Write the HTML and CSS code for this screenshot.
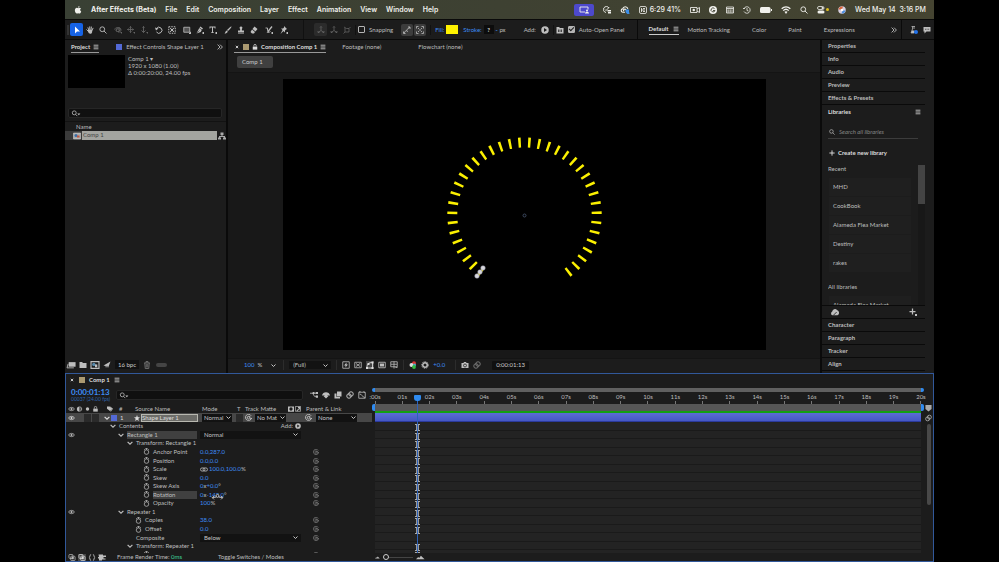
FILE: index.html
```
<!DOCTYPE html>
<html lang="en">

<head>
    <meta charset="UTF-8">
    <meta name="viewport" content="width=device-width, initial-scale=1.0">
    <title>After Effects (Beta)</title>
    <link rel="stylesheet" href="styles.css">
</head>

<body>

    <!-- Icon sprite -->
    <svg class="sprite" aria-hidden="true">
        <symbol id="i-apple" viewBox="0 0 16 16"><path fill="currentColor" d="M11 0c.1 1.6-1.2 3.2-2.9 3.300C8 1.7 9.4.2 11 0zM8.300 4.300c.7 0 1.600-.8 2.900-.7 1.200.1 2.100.6 2.700 1.500-2.400 1.500-2 4.700.5 5.700-.6 1.800-2 4.300-3.500 4.300-1 0-1.400-.6-2.600-.6s-1.600.6-2.600.6C3.800 15.100 1.600 11.500 1.700 8.500c.1-2.800 1.900-4.700 4-4.800 1 0 1.900.6 2.600.6z"/></symbol>
        <symbol id="i-menu" viewBox="0 0 10 10"><path stroke="currentColor" stroke-width="1.3" d="M1 2h8M1 5h8M1 8h8"/></symbol>
        <symbol id="i-more" viewBox="0 0 10 10"><path fill="none" stroke="currentColor" stroke-width="1.5" d="M1 1l4 4-4 4M5 1l4 4-4 4"/></symbol>
        <symbol id="i-down" viewBox="0 0 10 10"><path fill="none" stroke="currentColor" stroke-width="2" d="M1 3l4 4 4-4"/></symbol>
        <symbol id="i-close" viewBox="0 0 10 10"><path stroke="currentColor" stroke-width="1.5" d="M3 3l4 4M7 3L3 7"/></symbol>
        <symbol id="i-search" viewBox="0 0 16 16"><g fill="none" stroke="currentColor" stroke-width="1.8"><circle cx="6.500" cy="6.500" r="4.800"/><path d="M10 10l5 5"/></g></symbol>
        <symbol id="i-searchmenu" viewBox="0 0 20 16"><g fill="none" stroke="currentColor" stroke-width="1.8"><circle cx="6" cy="6.500" r="4.500"/><path d="M9 10l4 4"/></g><path fill="currentColor" d="M13 8h7l-3.500 4z"/></symbol>
        <symbol id="i-arrow" viewBox="0 0 16 16"><path fill="currentColor" d="M4 1v14l4-4h6z"/></symbol>
        <symbol id="i-hand" viewBox="0 0 16 16"><path fill="none" stroke="currentColor" stroke-width="1.9" stroke-linecap="round" d="M5.500 8L4 3.500M7.500 7V1.500M10 7l.8-5M12 8.500l2-4M5 11L1.500 7.500"/><path fill="currentColor" d="M4.500 7.500h8.500l-1 5.500c-.5 1.500-1.500 2.500-3.500 2.500S5 14 3.500 10z"/></symbol>
        <symbol id="i-orbit" viewBox="0 0 16 16"><g fill="none" stroke="currentColor" stroke-width="1.6"><path d="M3 9C0 6 3 3 7 3s7 2 7 5-3 5-6 4"/><path d="M5 6h5v5H5zM5 6l2-2h5v4l-2 2"/></g><path fill="currentColor" d="M12 12h4v4z"/></symbol>
        <symbol id="i-pan" viewBox="0 0 16 16"><path fill="none" stroke="currentColor" stroke-width="1.7" d="M7 1v12M1 7h12M5 3l2-2 2 2M5 11l2 2 2-2M3 5L1 7l2 2M11 5l2 2-2 2"/><path fill="currentColor" d="M12 12h4v4z"/></symbol>
        <symbol id="i-dolly" viewBox="0 0 16 16"><path fill="none" stroke="currentColor" stroke-width="1.8" d="M7 1v12M3 9l4 4 4-4M5 3l2-2 2 2"/><path fill="currentColor" d="M12 12h4v4z"/></symbol>
        <symbol id="i-rotate" viewBox="0 0 16 16"><path fill="none" stroke="currentColor" stroke-width="2" d="M3 5a6 6 0 1 1 0 7"/><path fill="currentColor" d="M0 3l7 2-5 4z"/></symbol>
        <symbol id="i-anchor" viewBox="0 0 16 16"><path fill="none" stroke="currentColor" stroke-width="2" stroke-dasharray="3 2" d="M1.500 1.500h13v13h-13z"/><path stroke="currentColor" stroke-width="1.8" d="M4 4l8 8M12 4l-8 8"/><circle cx="8" cy="8" r="2.500" fill="currentColor"/></symbol>
        <symbol id="i-rect" viewBox="0 0 16 16"><path fill="#555" stroke="currentColor" stroke-width="1.6" d="M1.500 2.500h12v10h-12z"/><path fill="currentColor" d="M12 14l4-3v5h-4z"/></symbol>
        <symbol id="i-pen" viewBox="0 0 16 16"><path fill="currentColor" d="M9 1l5 4-2 2-5-4zM6.500 4l5 4-2 4L1 15l4-8zM13 12h3v4h-3z"/><path stroke="#1c1c1c" d="M1 15l6-6"/></symbol>
        <symbol id="i-type" viewBox="0 0 16 16"><path fill="currentColor" d="M1 1h12v4h-1.500L11 3H8v9.500l2 .5v1H4v-1l2-.5V3H3l-.5 2H1zM13 12h3v4h-3z"/></symbol>
        <symbol id="i-brush" viewBox="0 0 16 16"><path fill="currentColor" d="M15 1c.8.800-4 6.500-7 9L6 8c3-3 8-8 9-7zM5.500 9l2 2c-1 3-3 4-6.500 4 2-2 2-5 4.500-6z"/></symbol>
        <symbol id="i-stamp" viewBox="0 0 16 16"><path fill="currentColor" d="M8 1c3 0 3.500 2.500 2 5-.5 1-.5 2 0 3h4v3H2V9h4c.5-1 .5-2 0-3-1.500-2.500-1-5 2-5zM2 13h12v2H2z"/></symbol>
        <symbol id="i-eraser" viewBox="0 0 16 16"><path fill="currentColor" d="M9 1l6 5-4 5-6-5zM4 7l6 5-2 3H4L1 12z"/></symbol>
        <symbol id="i-roto" viewBox="0 0 16 16"><path fill="none" stroke="currentColor" stroke-width="1.8" d="M1 4h4v5c0 4 4 4 6 2"/><path fill="none" stroke="currentColor" stroke-width="2.5" d="M14 1L6 11"/><path fill="currentColor" d="M3 14l4-4 1 3zM13 12h3v4h-3z"/></symbol>
        <symbol id="i-pin" viewBox="0 0 16 16"><path fill="currentColor" d="M8 0l6 6-2 1-2 2v4L2 5h4l2-2zM5 8l2 2-6 6zM13 12h3v4h-3z"/></symbol>
        <symbol id="i-axis" viewBox="0 0 16 16"><path fill="none" stroke="currentColor" stroke-width="1.6" d="M8 1v8l-6 4M8 9l6 4M6 3l2-2 2 2M2 10v3h3M14 10v3h-3"/></symbol>
        <symbol id="i-axisview" viewBox="0 0 16 16"><path fill="none" stroke="currentColor" stroke-width="1.5" d="M2 2l5 3h5v7H4V4M12 5l3-3M4 12l-3 3"/></symbol>
        <symbol id="i-snapedge" viewBox="0 0 16 16"><path fill="none" stroke="currentColor" stroke-width="1.7" d="M2 14l4-5 4 2M7 8l7-6M10 2h4v4M1 11v4h4"/></symbol>
        <symbol id="i-snapgrid" viewBox="0 0 16 16"><path fill="none" stroke="currentColor" stroke-width="1.6" d="M1 5V1h4M11 1h4v4M15 11v4h-4M5 15H1v-4M4 4l3 3M12 4L9 7M4 12l3-3M12 12L9 9"/></symbol>
        <symbol id="i-add" viewBox="0 0 16 16"><circle cx="8" cy="8" r="7.500" fill="currentColor"/><path fill="#1c1c1c" d="M6 4l6 4-6 4z"/></symbol>
        <symbol id="i-panel" viewBox="0 0 16 16"><path fill="currentColor" d="M1 2h6v2h8v11H1z"/><path fill="none" stroke="#1c1c1c" stroke-width="1.5" d="M5 7v5M8 7v5M11 7v5"/></symbol>
        <symbol id="i-flask" viewBox="0 0 16 16"><path fill="none" stroke="currentColor" stroke-width="1.5" d="M3 1h7M5 1v5L2 14h6M8 1v5"/><path fill="currentColor" d="M4 9h5v5H2z"/><circle cx="12" cy="12" r="4" fill="#2272eb"/></symbol>
        <symbol id="i-chat" viewBox="0 0 16 16"><path fill="currentColor" d="M1 2h14v9H7l-4 4v-4H1z"/><path stroke="#1c1c1c" stroke-width="1.6" stroke-dasharray="1.6 1.7" d="M4 6.500h9"/></symbol>
        <symbol id="i-comp" viewBox="0 0 16 16"><path fill="#aaa" stroke="#ddd" d="M1 2h14v12H1z"/><circle cx="6" cy="7" r="3" fill="#3a6ea8"/><path fill="#c0543f" d="M8 7h5v4H8z"/></symbol>
        <symbol id="i-flow" viewBox="0 0 16 16"><path fill="currentColor" d="M5 1h6v5H9v2h5v3h2v4h-6v-4h2v-1H4v1h2v4H0v-4h2V8h5V6H5z"/></symbol>
        <symbol id="i-footage" viewBox="0 0 16 14"><path fill="currentColor" d="M4 2h12v8H4z"/><path fill="none" stroke="currentColor" stroke-width="1.5" d="M3 5L1 12h12"/></symbol>
        <symbol id="i-folder" viewBox="0 0 16 14"><path fill="currentColor" d="M1 1h5l2 2h7v10H1z"/></symbol>
        <symbol id="i-newcomp" viewBox="0 0 16 14"><path fill="none" stroke="currentColor" stroke-width="2" d="M1 1h14v12H1z"/><circle cx="6" cy="6" r="3" fill="#58a"/><path fill="currentColor" d="M8 6h4v5H8z"/></symbol>
        <symbol id="i-rocket" viewBox="0 0 16 16"><path fill="currentColor" d="M15 1L10 14 8 9 6 14 5 10 1 9z"/></symbol>
        <symbol id="i-trash" viewBox="0 0 16 16"><path fill="none" stroke="currentColor" stroke-width="1.7" d="M2 4h12M6 4V1h4v3M3.500 4l1 11h7l1-11M6.500 6v7M9.500 6v7"/></symbol>
        <symbol id="i-fast" viewBox="0 0 16 16"><path fill="none" stroke="currentColor" stroke-width="1.6" d="M1.500 1.500h13v13h-13z"/><path fill="currentColor" d="M9 3l-5 6h3v4l5-6H9z"/></symbol>
        <symbol id="i-alpha" viewBox="0 0 16 16"><path fill="none" stroke="currentColor" stroke-width="1.6" d="M1.500 2.500h13v11h-13zM4 5l8 6M12 5l-8 6"/></symbol>
        <symbol id="i-mask" viewBox="0 0 16 16"><path fill="none" stroke="currentColor" stroke-width="1.7" d="M2 14C2 6 5 3 13 3v11z"/><path fill="currentColor" d="M0 12h4v4H0zM11 12h4v4h-4zM11 1h4v4h-4zM3 4h4v4H3z"/></symbol>
        <symbol id="i-region" viewBox="0 0 16 16"><path fill="none" stroke="currentColor" stroke-width="1.7" d="M1.500 2.500h13v11h-13z"/><path fill="currentColor" d="M4 5h8v6H4z"/></symbol>
        <symbol id="i-grid" viewBox="0 0 16 16"><path fill="none" stroke="currentColor" stroke-width="1.6" d="M1.500 1.500h13v10h-13zM8 1v14M2 6.500h12M11 13h4"/></symbol>
        <symbol id="i-rgb" viewBox="0 0 16 16"><circle cx="10" cy="4.500" r="4" fill="#d33"/><circle cx="5" cy="8" r="4" fill="#ddd"/><circle cx="11" cy="8" r="3" fill="#4ac"/><circle cx="10" cy="12" r="3.800" fill="#3b4"/></symbol>
        <symbol id="i-shutter" viewBox="0 0 16 16"><circle cx="8" cy="8" r="4.500" fill="none" stroke="currentColor" stroke-width="3"/><circle cx="8" cy="8" r="6.800" fill="none" stroke="currentColor" stroke-width="1.5" stroke-dasharray="3 2"/></symbol>
        <symbol id="i-camera" viewBox="0 0 16 16"><path fill="currentColor" d="M1 4h4l1-2h4l1 2h4v10H1z"/><circle cx="8" cy="9" r="3" fill="none" stroke="#1c1c1c" stroke-width="1.5"/></symbol>
        <symbol id="i-link" viewBox="0 0 16 16"><g fill="none" stroke="currentColor" stroke-width="2"><circle cx="10" cy="6" r="4.500"/><circle cx="6" cy="10" r="4.500"/></g></symbol>
        <symbol id="i-whip" viewBox="0 0 16 16"><path fill="none" stroke="currentColor" stroke-width="1.6" d="M14 4A7 7 0 1 0 15 9c0 3-4 3-4 0V5M11 8a3 3 0 1 0-1 2.500"/></symbol>
        <symbol id="i-chain" viewBox="0 0 18 10"><g fill="none" stroke="currentColor" stroke-width="1.8"><rect x="1" y="1.500" width="10" height="7" rx="3.500"/><rect x="7" y="1.500" width="10" height="7" rx="3.500"/></g></symbol>
        <symbol id="i-eye" viewBox="0 0 16 10"><path fill="none" stroke="currentColor" stroke-width="1.8" d="M1 5c3.500-5 10.500-5 14 0-3.500 5-10.500 5-14 0z"/><circle cx="8" cy="5" r="2.400" fill="currentColor"/></symbol>
        <symbol id="i-audio" viewBox="0 0 16 16"><path fill="currentColor" d="M8 1v14a7 7 0 0 1 0-14z"/><path fill="none" stroke="currentColor" stroke-width="1.6" d="M8 2a6 6 0 0 1 0 12M10 5a3 3 0 0 1 0 6"/></symbol>
        <symbol id="i-dot" viewBox="0 0 16 16"><circle cx="8" cy="8" r="4.500" fill="currentColor"/></symbol>
        <symbol id="i-lock" viewBox="0 0 16 16"><path fill="currentColor" d="M2 7h12v8H2z"/><path fill="none" stroke="currentColor" stroke-width="2" d="M5 7V4a3 3 0 0 1 6 0v3"/></symbol>
        <symbol id="i-tag" viewBox="0 0 16 16"><path fill="currentColor" d="M0 1h7l7 6-6 6-8-6zM9 1l7 6-6 8-1-1 5-7-6-6z"/></symbol>
        <symbol id="i-star" viewBox="0 0 16 16"><path fill="currentColor" d="M8 0l2.200 5.800L16 6l-4.500 3.800L13 16l-5-3.500L3 16l1.500-6.200L0 6l5.800-.2z"/></symbol>
        <symbol id="i-watch" viewBox="0 0 16 18"><g fill="none" stroke="currentColor" stroke-width="1.9"><circle cx="8" cy="10.500" r="5.800"/><path d="M5 1.500h6M8 1v4M2 3l2 2M14 3l-2 2"/></g></symbol>
        <symbol id="i-shy" viewBox="0 0 16 14"><path fill="currentColor" d="M0 8C1 -1 15 -1 16 8h-5v1h2l-5 5-5-5h2V8z"/></symbol>
        <symbol id="i-mini" viewBox="0 0 18 14"><path fill="none" stroke="currentColor" stroke-width="1.8" d="M0 3h6l4 7h6M6 3h10"/><path fill="currentColor" d="M6 0h4v5H6zM13 0h5v5h-5zM13 8h5v5h-5z"/></symbol>
        <symbol id="i-blend" viewBox="0 0 16 16"><path fill="currentColor" d="M6 1h9v10H6zM1 5h4v7h7v3H1z"/></symbol>
        <symbol id="i-graph" viewBox="0 0 16 16"><path fill="none" stroke="currentColor" stroke-width="1.6" d="M1.500 2.500h13v12h-13zM3 6c6 0 5 7 11 7M2 2l3-1M11 1l3 2"/></symbol>
        <symbol id="i-matte" viewBox="0 0 16 16"><path fill="currentColor" fill-rule="evenodd" d="M0 1h16v14H0zM8 3.500a4.500 4.500 0 1 0 0 9 4.500 4.500 0 0 0 0-9z"/></symbol>
        <symbol id="i-alphamatte" viewBox="0 0 16 16"><path fill="none" stroke="currentColor" stroke-width="2" d="M1 1h14v13H1z"/><path fill="currentColor" d="M14 2H8v3h3L4 12l2 2 6-7v3h2z"/></symbol>
        <symbol id="i-layers" viewBox="0 0 16 16"><g fill="none" stroke="currentColor" stroke-width="1.7"><rect x="1" y="1" width="9" height="9" rx="2"/><rect x="5" y="5" width="10" height="10" rx="2"/></g><path fill="currentColor" d="M7 7h5v5H7z"/></symbol>
        <symbol id="i-braces" viewBox="0 0 16 16"><path fill="none" stroke="currentColor" stroke-width="2" d="M6 1C2 1 5 7 1 8c4 1 1 7 5 7M10 1c4 0 1 6 5 7-4 1-1 7-5 7"/></symbol>
        <symbol id="i-render" viewBox="0 0 16 14"><path fill="currentColor" d="M1 1h9v2h6v3h-5v3h4v2H8v2H2V9H0V6h2z"/></symbol>
        <symbol id="i-hill" viewBox="0 0 20 10"><path fill="currentColor" d="M0 9l5-5 2 2 4-5 8 8z"/></symbol>
        <symbol id="i-cloud" viewBox="0 0 18 14"><path fill="currentColor" d="M4 13a4 4 0 0 1 0-7C5 2 10 0 13 4c4 1 5 8 0 9z"/><path stroke="#1c1c1c" stroke-width="1.5" d="M6 13l6-6"/></symbol>
        <symbol id="i-plus" viewBox="0 0 16 16"><path stroke="currentColor" stroke-width="2.5" d="M8 1v14M1 8h14"/></symbol>
        <symbol id="i-plusmenu" viewBox="0 0 16 16"><path stroke="currentColor" stroke-width="2.5" d="M7 1v12M1 7h12"/><path fill="currentColor" d="M12 12h4v4h-4z"/></symbol>
        <symbol id="i-marker" viewBox="0 0 16 16"><path fill="currentColor" d="M1 1h14v9l-7 6-7-6z"/></symbol>
        <symbol id="i-display" viewBox="0 0 20 14"><path fill="none" stroke="currentColor" stroke-width="1.8" d="M12 11H2V1h16v5"/><circle cx="16" cy="8" r="2" fill="currentColor"/><path fill="currentColor" d="M12 14c0-5 8-5 8 0z"/></symbol>
        <symbol id="i-task" viewBox="0 0 16 16"><path fill="none" stroke="currentColor" stroke-width="1.8" d="M12 4A6 6 0 1 0 6 13M4 7l2 2 6-6"/><path fill="currentColor" d="M9 8h7v3H9zM10 12h6v3h-6z"/></symbol>
        <symbol id="i-cc" viewBox="0 0 16 14"><path fill="none" stroke="currentColor" stroke-width="2" d="M8 11H4C0 10 1 5 4 5c1-5 8-5 9 0M6 9c-2-3 2-5 4-2"/><path fill="#3c8ee8" d="M9 6h6v4l1 4h-4l-3-3z"/></symbol>
        <symbol id="i-chip" viewBox="0 0 16 16"><rect x="1" y="1" width="14" height="14" rx="3" fill="none" stroke="currentColor" stroke-width="1.6"/><path stroke="currentColor" stroke-width="1.7" d="M4 8h8M5 4v8M8 5h4M8 11h4"/></symbol>
        <symbol id="i-record" viewBox="0 0 20 14"><path fill="none" stroke="currentColor" stroke-width="1.7" d="M1 2h13v10H1zM14 5l5-3v10l-5-3"/><circle cx="7.500" cy="7" r="2.500" fill="currentColor"/></symbol>
        <symbol id="i-grammar" viewBox="0 0 16 16"><circle cx="8" cy="8" r="8" fill="currentColor"/><path fill="none" stroke="#3e4132" stroke-width="1.8" d="M11 5a4 4 0 1 0 1 4H8"/></symbol>
        <symbol id="i-calendar" viewBox="0 0 16 14"><path fill="none" stroke="currentColor" stroke-width="1.6" d="M1 1h14v12H1zM1 4h14"/><path stroke="currentColor" stroke-width="2.5" stroke-dasharray="2.5 1.5" d="M3 7h10M3 10.500h10"/></symbol>
        <symbol id="i-clock" viewBox="0 0 16 16"><path fill="none" stroke="currentColor" stroke-width="1.6" d="M2 5a6.500 6.500 0 1 1 0 6M8 4v5l3 1M0 5h4"/></symbol>
        <symbol id="i-battery" viewBox="0 0 24 12"><rect x="0" y="0" width="21" height="12" rx="3" fill="currentColor"/><path fill="currentColor" d="M22 4h2v4h-2z"/></symbol>
        <symbol id="i-wifi" viewBox="0 0 16 13"><path fill="none" stroke="currentColor" stroke-width="2.2" d="M1 4.500c4-4 10-4 14 0M3.500 7.500c3-3 6-3 9 0"/><path fill="currentColor" d="M5.500 9.500c1.500-1.500 3.500-1.500 5 0L8 13z"/></symbol>
        <symbol id="i-control" viewBox="0 0 16 16"><rect x="1" y="1" width="13" height="6" rx="3" fill="none" stroke="currentColor" stroke-width="1.6"/><rect x="1" y="9" width="14" height="6" rx="3" fill="currentColor"/><circle cx="11" cy="4" r="2" fill="currentColor"/></symbol>
        <symbol id="i-siri" viewBox="0 0 16 16"><circle cx="8" cy="8" r="7.500" fill="#d7cfe0"/><path fill="#d8653b" d="M1 7a7.500 7.500 0 0 1 9-6L8 7z"/><path fill="#4c8fe0" d="M15 9a7.500 7.500 0 0 1-8 6l2-6z"/><circle cx="8" cy="8" r="2.500" fill="#fff"/></symbol>
    </svg>

    <div class="app">

        <header class="menubar">
            <svg class="apple"><use href="#i-apple"/></svg>
            <nav>
                <button class="app-name">After Effects (Beta)</button>
                <button>File</button>
                <button>Edit</button>
                <button>Composition</button>
                <button>Layer</button>
                <button>Effect</button>
                <button>Animation</button>
                <button>View</button>
                <button>Window</button>
                <button>Help</button>
            </nav>
            <div class="status">
                <span class="sharing"><svg class="wide"><use href="#i-display"/></svg></span>
                <svg><use href="#i-task"/></svg>
                <svg class="wide"><use href="#i-cc"/></svg>
                <span class="usage"><svg><use href="#i-chip"/></svg>6:29 41%</span>
                <svg class="wide"><use href="#i-record"/></svg>
                <svg><use href="#i-grammar"/></svg>
                <svg><use href="#i-calendar"/></svg>
                <svg><use href="#i-clock"/></svg>
                <svg class="battery"><use href="#i-battery"/></svg>
                <svg class="wide"><use href="#i-wifi"/></svg>
                <svg><use href="#i-search"/></svg>
                <span class="control"><svg><use href="#i-control"/></svg><i></i></span>
                <svg><use href="#i-siri"/></svg>
                <span class="date">Wed May 14 &nbsp;3:16 PM</span>
            </div>
        </header>

        <div class="toolbar">
            <span class="grip"></span>
            <div class="tools">
                <button class="tool active" aria-label="Selection"><svg><use href="#i-arrow"/></svg></button>
                <button class="tool" aria-label="Hand"><svg><use href="#i-hand"/></svg></button>
                <button class="tool" aria-label="Zoom"><svg><use href="#i-search"/></svg></button>
            </div>
            <div class="tools dim">
                <button class="tool" aria-label="Orbit"><svg><use href="#i-orbit"/></svg></button>
                <button class="tool" aria-label="Pan"><svg><use href="#i-pan"/></svg></button>
                <button class="tool" aria-label="Dolly"><svg><use href="#i-dolly"/></svg></button>
            </div>
            <div class="tools">
                <button class="tool" aria-label="Rotation"><svg><use href="#i-rotate"/></svg></button>
                <button class="tool" aria-label="Anchor"><svg><use href="#i-anchor"/></svg></button>
            </div>
            <div class="tools">
                <button class="tool" aria-label="Rectangle"><svg><use href="#i-rect"/></svg></button>
                <button class="tool" aria-label="Pen"><svg><use href="#i-pen"/></svg></button>
                <button class="tool" aria-label="Type"><svg><use href="#i-type"/></svg></button>
            </div>
            <div class="tools">
                <button class="tool" aria-label="Brush"><svg><use href="#i-brush"/></svg></button>
                <button class="tool" aria-label="Clone stamp"><svg><use href="#i-stamp"/></svg></button>
                <button class="tool" aria-label="Eraser"><svg><use href="#i-eraser"/></svg></button>
            </div>
            <div class="tools">
                <button class="tool" aria-label="Roto brush"><svg><use href="#i-roto"/></svg></button>
            </div>
            <div class="tools">
                <button class="tool" aria-label="Puppet pin"><svg><use href="#i-pin"/></svg></button>
            </div>
            <span class="divider full"></span>
            <div class="tools dim">
                <button class="tool boxed" aria-label="Local axis"><svg><use href="#i-axis"/></svg></button>
                <button class="tool" aria-label="World axis"><svg><use href="#i-axis"/></svg></button>
                <button class="tool" aria-label="View axis"><svg><use href="#i-axisview"/></svg></button>
            </div>
            <span class="divider"></span>
            <label class="check snapping"><input type="checkbox">Snapping</label>
            <div class="snap-options">
                <button class="tool" aria-label="Snap to edges"><svg><use href="#i-snapedge"/></svg></button>
                <button class="tool" aria-label="Snap to features"><svg><use href="#i-snapgrid"/></svg></button>
            </div>
            <span class="divider"></span>
            <div class="paint">
                <button class="blue">Fill:</button><button class="swatch" aria-label="Fill colour"></button>
                <button class="blue stroke">Stroke:</button><button class="swatch none">?</button>
                <span><b class="blue">-</b> px</span>
            </div>
            <div class="add">Add: <button aria-label="Add"><svg><use href="#i-add"/></svg></button></div>
            <span class="divider"></span>
            <button class="tool panel-icon" aria-label="Panels"><svg><use href="#i-panel"/></svg></button>
            <label class="check"><input type="checkbox" checked>Auto-Open Panel</label>
            <div class="workspaces">
                <button class="current">Default <svg><use href="#i-menu"/></svg></button>
                <button>Motion Tracking</button>
                <button>Color</button>
                <button>Paint</button>
                <button>Expressions</button>
                <button class="more" aria-label="More workspaces"><svg><use href="#i-more"/></svg></button>
            </div>
            <div class="feedback">
                <button aria-label="Beta"><svg><use href="#i-flask"/></svg></button>
                <button aria-label="Feedback"><svg><use href="#i-chat"/></svg></button>
            </div>
        </div>

        <main class="workspace">

            <section class="panel project">
                <div class="tabs">
                    <button class="tab current">Project <svg class="tiny"><use href="#i-menu"/></svg></button>
                    <button class="tab effects"><i class="chip blue-chip"></i>Effect Controls Shape Layer 1</button>
                    <button class="more" aria-label="More tabs"><svg class="tiny"><use href="#i-more"/></svg></button>
                </div>
                <div class="summary">
                    <div class="thumb"></div>
                    <div>
                        <p>Comp 1 ▾</p>
                        <p>1920 x 1080 (1.00)</p>
                        <p>Δ 0:00:20:00, 24.00 fps</p>
                    </div>
                </div>
                <div class="searchbox">
                    <svg class="wide"><use href="#i-searchmenu"/></svg>
                    <input type="text" aria-label="Search project">
                </div>
                <div class="list-head">Name</div>
                <div class="list-row">
                    <svg><use href="#i-comp"/></svg>
                    <span>Comp 1</span>
                    <svg><use href="#i-flow"/></svg>
                </div>
                <div class="panel-foot project-foot">
                    <svg class="wide"><use href="#i-footage"/></svg>
                    <svg><use href="#i-folder"/></svg>
                    <svg class="wide"><use href="#i-newcomp"/></svg>
                    <svg><use href="#i-rocket"/></svg>
                    <button class="depth">16 bpc</button>
                    <svg class="faint"><use href="#i-trash"/></svg>
                    <i class="pill"></i>
                </div>
            </section>

            <section class="panel viewer">
                <div class="tabs">
                    <button class="tab current">
                        <svg class="tiny"><use href="#i-close"/></svg>
                        <i class="chip tan-chip"></i>
                        <svg class="tiny"><use href="#i-lock"/></svg>
                        Composition Comp 1
                        <svg class="tiny"><use href="#i-menu"/></svg>
                    </button>
                    <button class="tab">Footage (none)</button>
                    <button class="tab flowchart">Flowchart (none)</button>
                </div>
                <div class="crumbs"><button>Comp 1</button></div>
                <div class="stage">
                    <svg class="canvas" viewBox="0 0 483 271" preserveAspectRatio="xMidYMid meet">
                        <rect width="483" height="271" fill="#000"/>
                        <path d="M198.500 193.700A72.200 72.200 0 1 1 284.500 193.700" pathLength="286.600" fill="none" stroke="#fbf000" stroke-width="10" stroke-dasharray="2 5.690"/>
                        <g fill="#d6d6dc" stroke="#8f8fa0" stroke-width=".5">
                            <circle cx="194" cy="197" r="2.300"/>
                            <circle cx="197" cy="193" r="2.300"/>
                            <circle cx="200" cy="189" r="2.300"/>
                        </g>
                        <circle cx="241.500" cy="136.500" r="1.500" fill="none" stroke="#3d4a60"/>
                    </svg>
                </div>
                <div class="panel-foot viewer-foot">
                    <button class="drop zoom"><span class="blue">100</span> %<svg><use href="#i-down"/></svg></button>
                    <span class="divider"></span>
                    <div class="drop resolution">
                        <select aria-label="Resolution"><option>(Full)</option></select>
                        <svg><use href="#i-down"/></svg>
                    </div>
                    <span class="divider"></span>
                    <div class="icons">
                        <svg><use href="#i-fast"/></svg>
                        <svg><use href="#i-alpha"/></svg>
                        <svg class="on"><use href="#i-mask"/></svg>
                        <svg><use href="#i-region"/></svg>
                        <svg><use href="#i-grid"/></svg>
                    </div>
                    <span class="divider"></span>
                    <div class="icons">
                        <svg><use href="#i-rgb"/></svg>
                        <svg><use href="#i-shutter"/></svg>
                        <span class="blue">+0.0</span>
                    </div>
                    <span class="divider far"></span>
                    <div class="icons">
                        <svg><use href="#i-camera"/></svg>
                        <svg class="faint"><use href="#i-link"/></svg>
                    </div>
                    <button class="timecode">0:00:01:13</button>
                </div>
            </section>

            <aside class="panel side">
                <button class="fold">Properties</button>
                <button class="fold">Info</button>
                <button class="fold">Audio</button>
                <button class="fold">Preview</button>
                <button class="fold">Effects &amp; Presets</button>
                <div class="library-head">Libraries <svg class="tiny"><use href="#i-menu"/></svg></div>
                <div class="library">
                    <div class="library-search">
                        <svg class="tiny"><use href="#i-search"/></svg>
                        <input type="text" placeholder="Search all libraries" aria-label="Search all libraries">
                    </div>
                    <button class="create"><svg class="tiny"><use href="#i-plus"/></svg>Create new library</button>
                    <div class="library-scroll">
                        <div class="library-list">
                            <h4>Recent</h4>
                            <a href="#">MHD</a>
                            <a href="#">CookBook</a>
                            <a href="#">Alameda Flea Market</a>
                            <a href="#">Destiny</a>
                            <a href="#">rakes</a>
                            <h4>All libraries</h4>
                            <a href="#">Alameda Flea Market</a>
                        </div>
                        <div class="scrollbar"><i></i></div>
                    </div>
                </div>
                <div class="library-foot">
                    <svg class="wide"><use href="#i-cloud"/></svg>
                    <svg><use href="#i-plusmenu"/></svg>
                </div>
                <button class="fold">Character</button>
                <button class="fold">Paragraph</button>
                <button class="fold">Tracker</button>
                <button class="fold">Align</button>
            </aside>
        </main>

        <section class="timeline">
            <div class="timeline-tab">
                <svg class="tiny"><use href="#i-close"/></svg>
                <i class="chip tan-chip"></i>
                <b>Comp 1</b>
                <svg class="tiny"><use href="#i-menu"/></svg>
            </div>
            <div class="timeline-body">

                <div class="outline">
                    <div class="time-row">
                        <div class="current-time"><strong>0:00:01:13</strong><small>00037 (24.00 fps)</small></div>
                        <div class="searchbox">
                            <svg class="wide"><use href="#i-searchmenu"/></svg>
                            <input type="text" aria-label="Search layers">
                        </div>
                        <div class="switches">
                            <svg><use href="#i-mini"/></svg>
                            <svg><use href="#i-shy"/></svg>
                            <svg><use href="#i-blend"/></svg>
                            <svg><use href="#i-link"/></svg>
                            <svg><use href="#i-graph"/></svg>
                        </div>
                    </div>
                    <div class="columns">
                        <span class="av"><svg><use href="#i-eye"/></svg><svg><use href="#i-audio"/></svg><svg><use href="#i-dot"/></svg><svg><use href="#i-lock"/></svg></span>
                        <span class="label"><svg><use href="#i-tag"/></svg></span>
                        <span class="num">#</span>
                        <span class="source">Source Name</span>
                        <span class="mode">Mode</span>
                        <span class="t">T</span>
                        <span class="track">Track Matte</span>
                        <span class="mattes"><svg><use href="#i-matte"/></svg><svg><use href="#i-alphamatte"/></svg></span>
                        <span class="parent">Parent &amp; Link</span>
                    </div>
                    <div class="layer">
                        <span class="av"><svg><use href="#i-eye"/></svg><i></i><i></i><i></i></span>
                        <span class="label"><svg><use href="#i-down"/></svg><i class="chip blue-chip"></i></span>
                        <span class="num">1</span>
                        <span class="source"><svg><use href="#i-star"/></svg><b>Shape Layer 1</b></span>
                        <div class="drop mode"><select aria-label="Mode"><option>Normal</option></select><svg><use href="#i-down"/></svg></div>
                        <span class="t"><i></i></span>
                        <svg class="matte-whip"><use href="#i-whip"/></svg>
                        <div class="drop matte"><select aria-label="Track matte"><option>No Mat</option></select><svg><use href="#i-down"/></svg></div>
                        <svg class="parent-whip"><use href="#i-whip"/></svg>
                        <div class="drop none"><select aria-label="Parent"><option>None</option></select><svg><use href="#i-down"/></svg></div>
                    </div>
                    <div class="scroller">
                        <div class="rows">
                            <div class="row">
                                <span class="eye"></span>
                                <span class="name l1"><svg><use href="#i-down"/></svg>Contents</span>
                                <span class="value add-prop">Add: <svg><use href="#i-add"/></svg></span>
                            </div>
                            <div class="row">
                                <span class="eye"><svg><use href="#i-eye"/></svg></span>
                                <span class="name l2"><svg><use href="#i-down"/></svg><b>Rectangle 1</b></span>
                                <div class="value drop"><select aria-label="Rectangle mode"><option>Normal</option></select><svg><use href="#i-down"/></svg></div>
                            </div>
                            <div class="row">
                                <span class="eye"></span>
                                <span class="name l3"><svg><use href="#i-down"/></svg>Transform: Rectangle 1</span>
                            </div>
                            <div class="row">
                                <span class="eye"></span>
                                <span class="name l5"><svg><use href="#i-watch"/></svg>Anchor Point</span>
                                <span class="value"><em>0.0,287.0</em></span>
                                <svg class="whip"><use href="#i-whip"/></svg>
                            </div>
                            <div class="row">
                                <span class="eye"></span>
                                <span class="name l5"><svg><use href="#i-watch"/></svg>Position</span>
                                <span class="value"><em>0.0,0.0</em></span>
                                <svg class="whip"><use href="#i-whip"/></svg>
                            </div>
                            <div class="row">
                                <span class="eye"></span>
                                <span class="name l5"><svg><use href="#i-watch"/></svg>Scale</span>
                                <span class="value linked"><svg><use href="#i-chain"/></svg><em>100.0,100.0</em>%</span>
                                <svg class="whip"><use href="#i-whip"/></svg>
                            </div>
                            <div class="row">
                                <span class="eye"></span>
                                <span class="name l5"><svg><use href="#i-watch"/></svg>Skew</span>
                                <span class="value"><em>0.0</em></span>
                                <svg class="whip"><use href="#i-whip"/></svg>
                            </div>
                            <div class="row">
                                <span class="eye"></span>
                                <span class="name l5"><svg><use href="#i-watch"/></svg>Skew Axis</span>
                                <span class="value"><em>0</em>x<em>+0.0</em>°</span>
                                <svg class="whip"><use href="#i-whip"/></svg>
                            </div>
                            <div class="row">
                                <span class="eye"></span>
                                <span class="name l5"><svg><use href="#i-watch"/></svg><b>Rotation</b></span>
                                <span class="value scrub"><em>0</em>x<em>-142.0</em>°
                                    <svg class="cursor" viewBox="0 0 22 12"><g fill="none" stroke="#ccc" stroke-width="1.5"><circle cx="11" cy="5" r="2.500" fill="#222"/><path d="M9 7L2 8M5 5L2 8l3 3M13 7l7 1M17 5l3 3-3 3"/></g></svg>
                                </span>
                                <svg class="whip"><use href="#i-whip"/></svg>
                            </div>
                            <div class="row">
                                <span class="eye"></span>
                                <span class="name l5"><svg><use href="#i-watch"/></svg>Opacity</span>
                                <span class="value"><em>100</em>%</span>
                                <svg class="whip"><use href="#i-whip"/></svg>
                            </div>
                            <div class="row">
                                <span class="eye"><svg><use href="#i-eye"/></svg></span>
                                <span class="name l2"><svg><use href="#i-down"/></svg>Repeater 1</span>
                            </div>
                            <div class="row">
                                <span class="eye"></span>
                                <span class="name l4"><svg><use href="#i-watch"/></svg>Copies</span>
                                <span class="value"><em>38.0</em></span>
                                <svg class="whip"><use href="#i-whip"/></svg>
                            </div>
                            <div class="row">
                                <span class="eye"></span>
                                <span class="name l4"><svg><use href="#i-watch"/></svg>Offset</span>
                                <span class="value"><em>0.0</em></span>
                                <svg class="whip"><use href="#i-whip"/></svg>
                            </div>
                            <div class="row">
                                <span class="eye"></span>
                                <label class="name composite" for="composite">Composite</label>
                                <div class="value drop"><select id="composite"><option>Below</option></select><svg><use href="#i-down"/></svg></div>
                                <svg class="whip"><use href="#i-whip"/></svg>
                            </div>
                            <div class="row">
                                <span class="eye"></span>
                                <span class="name l3"><svg><use href="#i-down"/></svg>Transform: Repeater 1</span>
                            </div>
                            <div class="row">
                                <span class="eye"></span>
                                <span class="name l5"><svg><use href="#i-watch"/></svg>Anchor Point</span>
                                <span class="value"><em>0.0,0.0</em></span>
                                <svg class="whip"><use href="#i-whip"/></svg>
                            </div>
                        </div>
                    </div>
                    <div class="outline-foot">
                        <svg><use href="#i-layers"/></svg>
                        <svg class="on"><use href="#i-layers"/></svg>
                        <svg><use href="#i-braces"/></svg>
                        <svg><use href="#i-render"/></svg>
                        <span class="render">Frame Render Time: <em>0ms</em></span>
                        <button>Toggle Switches / Modes</button>
                    </div>
                </div>

                <div class="graph">
                    <div class="graph-area">
                        <div class="navigator"></div>
                        <div class="ruler">
                            <span>:00s</span><span>01s</span><span>02s</span><span>03s</span><span>04s</span><span>05s</span><span>06s</span><span>07s</span><span>08s</span><span>09s</span><span>10s</span><span>11s</span><span>12s</span><span>13s</span><span>14s</span><span>15s</span><span>16s</span><span>17s</span><span>18s</span><span>19s</span><span>20s</span>
                        </div>
                        <div class="navigator work-area"></div>
                        <div class="cached"></div>
                        <div class="layer-bar"></div>
                        <div class="scroller">
                            <div class="rows tracks">
                                <i></i><i></i><i></i><i></i><i></i><i></i><i></i><i></i><i></i><i></i><i></i><i></i><i></i><i class="empty"></i><i></i><i></i>
                            </div>
                        </div>
                        <div class="playhead"></div>
                    </div>
                    <div class="graph-side">
                        <svg><use href="#i-marker"/></svg>
                        <svg><use href="#i-link"/></svg>
                        <i></i>
                    </div>
                    <div class="graph-foot">
                        <svg class="small"><use href="#i-hill"/></svg>
                        <input type="range" min="0" max="100" value="0" aria-label="Timeline zoom">
                        <svg class="big"><use href="#i-hill"/></svg>
                    </div>
                </div>
            </div>
        </section>
    </div>

</body>

</html>
```
FILE: styles.css
```
* {
    box-sizing: border-box;
}

body {
    margin: 0;
    background-color: #000;
    color: #bebebe;
    font-family: Lato, "Open Sans", sans-serif;
    font-size: 6px;
    line-height: 8px;
    overflow: hidden;
}

button,
input,
select {
    margin: 0;
    padding: 0;
    border: none;
    background: none;
    color: inherit;
    font: inherit;
    outline: none;
}

button {
    white-space: nowrap;
}

a {
    color: inherit;
    text-decoration: none;
}

p,
h4 {
    margin: 0;
    font-weight: normal;
}

svg {
    display: block;
    width: 8px;
    height: 8px;
    flex: none;
}

em {
    font-style: normal;
}

.sprite {
    display: none;
}

.wide {
    width: 10px;
}

.tiny {
    width: 6px;
    height: 6px;
}

.faint {
    color: #777;
}

.blue,
em {
    color: #3d8df5;
}

.app {
    display: flex;
    flex-direction: column;
    height: 100vh;
    margin: 0 65px;
    background-color: #0a0a0a;
}

/* Menu bar */
.menubar {
    display: flex;
    align-items: center;
    height: 19px;
    padding: 0 8px 0 9px;
    background: linear-gradient(90deg, #394034, #3e4132 50%, #454431);
    color: #f0f0ec;
    font-family: Inter, sans-serif;
    font-size: 7px;
    font-weight: 600;
    white-space: nowrap;
}

.apple {
    margin-right: 9px;
}

.menubar nav {
    display: flex;
    gap: 9px;
}

.app-name {
    font-weight: 700;
}

.status {
    display: flex;
    align-items: center;
    gap: 9px;
    margin-left: auto;
    font-weight: 500;
}

.sharing {
    display: flex;
    padding: 2px 5px;
    border-radius: 2px;
    background-color: #4d49cc;
}

.battery {
    width: 12px;
    height: 6px;
}

.usage {
    display: flex;
    align-items: center;
    gap: 3px;
}

.control {
    display: flex;
    align-items: center;
    gap: 1px;
}

.control i {
    width: 3px;
    height: 3px;
    border-radius: 50%;
    background-color: #e0c020;
}

/* Toolbar */
.toolbar {
    display: flex;
    align-items: center;
    height: 20px;
    margin-bottom: 1px;
    border-top: 1px solid #0a0a0a;
    background-color: #1c1c1c;
    white-space: nowrap;
}

.grip {
    width: 2px;
    height: 10px;
    margin: 0 1px 0 2px;
    background-color: #333;
}

.tools {
    display: flex;
    margin-right: 2px;
}

.tool {
    display: flex;
    align-items: center;
    justify-content: center;
    width: 13px;
    height: 13px;
    border-radius: 2px;
}

.tool.active {
    background-color: #1663e6;
    color: #fff;
}

.dim {
    color: #666;
}

.boxed {
    background-color: #2b2b2b;
}

.divider {
    width: 1px;
    height: 10px;
    background-color: #111;
}

.divider.full {
    height: 19px;
    margin: 0 10px 0 11px;
}

.check {
    display: flex;
    align-items: center;
    gap: 4px;
}

.snapping {
    margin: 0 8px 0 2px;
}

.check input {
    position: relative;
    appearance: none;
    width: 7px;
    height: 7px;
    border: 1px solid #b4b4b4;
    border-radius: 1px;
}

.check input:checked {
    background-color: #b4b4b4;
}

.check input:checked::after {
    content: "";
    position: absolute;
    left: 0;
    top: 0;
    width: 4px;
    height: 2px;
    border: solid #1c1c1c;
    border-width: 0 0 1px 1px;
    transform: rotate(-45deg);
}

.snap-options {
    display: flex;
    gap: 1px;
    margin-right: 4px;
}

.snap-options .tool {
    width: 12px;
    height: 12px;
    background-color: #3c3c3c;
}

.paint {
    display: flex;
    align-items: center;
    gap: 2px;
    margin: 0 18px 0 4px;
}

.stroke {
    margin-left: 3px;
}

.swatch {
    width: 12px;
    height: 9px;
    background-color: #fff200;
}

.swatch.none {
    width: 10px;
    background-color: #0c0c0c;
    color: #ddd;
    font-weight: bold;
}

.add {
    display: flex;
    align-items: center;
    gap: 5px;
    margin-right: 4px;
}

.panel-icon {
    margin-right: 1px;
}

.workspaces {
    display: flex;
    flex: 1;
    align-items: center;
    gap: 22px;
    height: 19px;
    margin-left: 12px;
    padding: 0 4px 0 11px;
    border-left: 1px solid #0a0a0a;
}

.workspaces .current {
    display: flex;
    gap: 4px;
    margin-right: -13px;
    padding-bottom: 1px;
    border-bottom: 1px solid #ccc;
    color: #ddd;
    font-weight: bold;
}

.workspaces svg {
    width: 6px;
    height: 6px;
}

.workspaces .current svg {
    margin-top: 1px;
}

.workspaces .more {
    margin-left: auto;
}

.feedback {
    display: flex;
    align-items: center;
    gap: 5px;
    height: 19px;
    padding: 0 3px 0 8px;
    border-left: 1px solid #0a0a0a;
}

/* Panels */
.workspace {
    display: flex;
    flex: 1;
    gap: 2px;
    min-height: 0;
}

.panel {
    display: flex;
    flex-direction: column;
    background-color: #1c1c1c;
    overflow: hidden;
}

.tabs {
    display: flex;
    align-items: center;
    height: 12px;
    margin-top: 1px;
}

.tab {
    display: flex;
    align-items: center;
    height: 11px;
}

.tab.current {
    border-bottom: 1px solid #999;
    color: #ddd;
    font-weight: bold;
}

.chip {
    width: 6px;
    height: 6px;
    flex: none;
}

.blue-chip {
    background-color: #5369d6;
}

.tan-chip {
    background-color: #ab9a71;
}

.project {
    width: 161px;
}

.project .tabs {
    padding: 0 3px 0 6px;
}

.project .tab.current {
    gap: 3px;
}

.effects {
    gap: 4px;
    margin-left: 17px;
}

.tabs .more {
    margin-left: auto;
}

.summary {
    display: flex;
    gap: 3px;
    padding: 2px 3px;
    line-height: 7px;
}

.summary p {
    white-space: nowrap;
}

.thumb {
    width: 57px;
    height: 33px;
    background-color: #000;
}

.searchbox {
    display: flex;
    align-items: center;
    height: 10px;
    border: 1px solid #262626;
    border-radius: 2px;
    background-color: #101010;
}

.searchbox svg {
    margin-left: 2px;
    height: 7px;
}

.searchbox input {
    flex: 1;
    min-width: 0;
}

.project .searchbox {
    margin: 18px 4px 3px 3px;
}

.list-head {
    padding: 1px 11px 0;
    border-top: 1px solid #121212;
}

.list-row {
    display: flex;
    align-items: center;
    gap: 1px;
    height: 9px;
    padding-left: 8px;
    background: linear-gradient(90deg, #3a3a3a 18px, #1c1c1c 18px);
    color: #444;
}

.list-row span {
    flex: 1;
    height: 9px;
    padding-left: 1px;
    background-color: #a3a49f;
}

.list-row svg {
    color: #aaa;
}

.panel-foot {
    display: flex;
    align-items: center;
    height: 15px;
    margin-top: auto;
    padding-bottom: 2px;
}

.project-foot {
    gap: 3px;
    padding-left: 1px;
}

.depth {
    width: 24px;
    height: 9px;
    margin: 0 1px;
    background-color: #111;
    color: #ccc;
}

.pill {
    width: 11px;
    height: 4px;
    margin-left: 2px;
    border-radius: 2px;
    background-color: #444;
}

/* Composition viewer */
.viewer {
    flex: 1;
    background-color: #181818;
}

.viewer .tabs {
    flex: none;
    margin-top: 0;
    padding: 1px 0 0 6px;
    height: 13px;
    background-color: #1c1c1c;
}

.viewer .tab.current {
    gap: 3px;
    margin-right: 16px;
}

.flowchart {
    margin-left: 37px;
}

.crumbs {
    flex: none;
    height: 20px;
    padding: 3px 9px;
    border-bottom: 1px solid #141414;
    background-color: #1c1c1c;
}

.crumbs button {
    height: 12px;
    padding: 0 10px 0 5px;
    border-radius: 2px;
    background-color: #404040;
    color: #ccc;
}

.stage {
    display: flex;
    flex: 1;
    min-height: 0;
    padding: 6px 54px 8px 55px;
}

.canvas {
    flex: 1;
    width: auto;
    height: 100%;
}

.viewer-foot {
    flex: none;
    padding-left: 16px;
    border-top: 1px solid #141414;
    background-color: #1c1c1c;
}

.viewer-foot .divider {
    margin: 0 5px;
    background-color: #2c2c2c;
}

.viewer-foot .far {
    margin-left: 10px;
}

.icons {
    display: flex;
    align-items: center;
    gap: 4px;
}

.on {
    background-color: #444;
    color: #ddd;
}

.timecode {
    height: 9px;
    margin-left: 11px;
    padding: 0 4px;
    border-radius: 1px;
    background-color: #101010;
    color: #ccc;
}

.drop {
    display: flex;
    align-items: center;
    height: 8px;
    background-color: #121212;
    color: #c4c4c4;
}

.drop select {
    flex: 1;
    min-width: 0;
    height: 8px;
    appearance: none;
    padding-left: 4px;
}

.drop svg {
    width: 5px;
    height: 5px;
    margin-right: 3px;
}

.zoom {
    gap: 3px;
    background: none;
}

.zoom svg {
    margin: 0 2px 0 6px;
}

.resolution {
    width: 42px;
}

/* Side panels */
.side {
    width: 112px;
    padding: 0 9px 2px 0;
}

.fold,
.library-head {
    flex: none;
    height: 13px;
    padding-left: 6px;
    border-bottom: 1px solid #0a0a0a;
    text-align: left;
    font-weight: bold;
}

.library-head {
    display: flex;
    align-items: center;
    justify-content: space-between;
    padding-right: 4px;
    border: none;
    color: #ddd;
}

.library {
    display: flex;
    flex: 1;
    flex-direction: column;
    min-height: 0;
    padding-left: 6px;
}

.library-search {
    display: flex;
    align-items: center;
    gap: 4px;
    flex: none;
    height: 14px;
    margin: 7px 7px 0 0;
    padding-left: 1px;
    border-bottom: 1px solid #3c3c3c;
}

.library-search input {
    flex: 1;
    min-width: 0;
    font-style: italic;
}

.library-search input::placeholder {
    color: #858585;
}

.create {
    display: flex;
    align-items: center;
    gap: 3px;
    flex: none;
    height: 26px;
    padding: 2px 0 0 1px;
    color: #ddd;
    font-weight: bold;
}

.library-scroll {
    display: flex;
    flex: 1;
    gap: 7px;
    min-height: 0;
}

.library-list {
    flex: 1;
    overflow: hidden;
}

.library-list h4 {
    padding-bottom: 5px;
}

.library-list a {
    display: block;
    height: 18px;
    margin: 0 0 1px 1px;
    padding: 5px 4px;
    background-color: #1f1f1f;
}

.library-list a + h4 {
    padding-top: 10px;
}

.scrollbar {
    width: 7px;
    background-color: #181818;
}

.scrollbar i {
    display: block;
    height: 39px;
    background-color: #444;
}

.library-foot {
    display: flex;
    align-items: center;
    justify-content: space-between;
    flex: none;
    height: 14px;
    padding: 0 8px;
    border: solid #0a0a0a;
    border-width: 1px 0;
}

/* Timeline */
.timeline {
    display: flex;
    flex-direction: column;
    height: 189px;
    border: 1px solid #31589a;
    background-color: #1c1c1c;
}

.timeline-tab {
    display: flex;
    align-items: center;
    gap: 4px;
    height: 12px;
    flex: none;
    padding-left: 3px;
    color: #ddd;
}

.timeline-body {
    display: flex;
    flex: 1;
    min-height: 0;
}

.outline {
    display: flex;
    flex-direction: column;
    width: 306px;
}

.time-row {
    display: flex;
    align-items: center;
    height: 18px;
    padding-left: 5px;
    flex: none;
}

.current-time {
    width: 45px;
}

.current-time strong {
    display: block;
    color: #3d8df5;
    font-size: 8px;
    line-height: 8px;
}

.current-time small {
    display: block;
    color: #2d62ab;
    font-size: 5px;
    line-height: 6px;
}

.time-row .searchbox {
    flex: 1;
}

.switches {
    display: flex;
    gap: 4px;
    margin: 0 6px 0 7px;
}

.columns,
.layer {
    display: flex;
    align-items: center;
    flex: none;
    height: 9px;
    white-space: nowrap;
}

.av {
    display: flex;
    align-items: center;
    gap: 1px;
    width: 38px;
    padding-left: 2px;
}

.av svg,
.eye svg {
    width: 7px;
    height: 6px;
}

.label {
    display: flex;
    align-items: center;
    justify-content: flex-end;
    gap: 3px;
    width: 12px;
}

.label svg {
    width: 6px;
    height: 6px;
}

.columns .label {
    width: 9px;
    margin-right: 3px;
}

.num {
    width: 19px;
    padding-left: 3px;
}

.source {
    width: 67px;
}

.columns .mode {
    width: 35px;
}

.columns .t {
    width: 8px;
}

.track {
    width: 43px;
}

.mattes {
    display: flex;
    gap: 1px;
    width: 18px;
}

.mattes svg {
    width: 6px;
    height: 6px;
}

.layer {
    background-color: #474747;
    color: #ddd;
}

.layer .av i {
    width: 7px;
    height: 8px;
    background-color: #2a2a2a;
}

.layer .av i:first-of-type {
    background: none;
}

.layer .label {
    width: 13px;
    gap: 1px;
}

.layer .num {
    width: 17px;
}

.layer .source {
    display: flex;
    align-items: center;
    gap: 1px;
    width: 68px;
}

.source svg {
    width: 6px;
    height: 6px;
}

.source b {
    width: 57px;
    height: 8px;
    border: 1px solid #b8b8b0;
    background-color: #6c6c68;
    font-weight: normal;
    line-height: 6px;
}

.layer .drop.mode {
    width: 30px;
}

.layer .drop svg {
    margin-right: 1px;
}

.layer .drop select {
    padding-left: 2px;
}

.layer .t {
    padding: 0 2px 0 4px;
}

.layer .t i {
    display: block;
    width: 7px;
    height: 8px;
    background-color: #2a2a2a;
}

.matte-whip,
.parent-whip {
    width: 7px;
    height: 7px;
}

.matte {
    width: 31px;
    margin-left: 3px;
}

.parent-whip {
    margin: 0 4px 0 19px;
}

.layer .drop.none {
    width: 41px;
}

.scroller {
    flex: 1;
    min-height: 0;
    overflow: hidden;
}

/* 16 rows share the height, the last one is cut off by the scroller */
.rows {
    display: grid;
    grid-auto-rows: 1fr;
    height: 137px;
}

.row {
    display: flex;
    align-items: center;
    min-height: 0;
    white-space: nowrap;
}

.eye {
    width: 11px;
    padding-left: 2px;
}

.name {
    display: flex;
    align-items: center;
    gap: 3px;
    width: 123px;
}

.name svg {
    width: 6px;
    height: 6px;
}

.l1 {
    padding-left: 33px;
}

.l2 {
    padding-left: 41px;
}

.l3 {
    padding-left: 50px;
}

.l4 {
    padding-left: 58px;
}

.l5 {
    padding-left: 66px;
}

.l4 svg,
.l5 svg {
    width: 7px;
    height: 7px;
}

.composite {
    padding-left: 59px;
}

.name b {
    flex: 1;
    height: 8px;
    margin-right: 3px;
    background-color: #404040;
    font-weight: normal;
}

.value {
    display: flex;
    align-items: center;
    width: 101px;
    margin-right: 12px;
}

.linked > svg {
    width: 8px;
    height: 5px;
    margin-right: 1px;
}

.add-prop {
    gap: 2px;
    justify-content: flex-end;
}

.add-prop > svg {
    width: 6px;
    height: 6px;
}

.value.scrub {
    position: relative;
}

.value .cursor {
    position: absolute;
    left: 11px;
    top: 2px;
    width: 13px;
    height: 7px;
}

.whip {
    width: 6px;
    height: 6px;
    color: #999;
}

.outline-foot {
    display: flex;
    align-items: center;
    gap: 2px;
    height: 8px;
    flex: none;
    padding-left: 2px;
    white-space: nowrap;
}

.outline-foot svg {
    width: 8px;
    height: 7px;
}

.render {
    margin-left: 9px;
}

.render em {
    color: #3fd29a;
}

.outline-foot button {
    margin-left: 34px;
}

.graph {
    display: grid;
    flex: 1;
    grid-template: 1fr 8px / 1fr 12px;
    min-width: 0;
    padding-left: 3px;
}

.graph-area {
    position: relative;
    display: flex;
    flex-direction: column;
    min-height: 0;
}

.navigator {
    flex: none;
    height: 4px;
    margin: 2px -3px 0;
    border: solid #2f8bf0;
    border-width: 0 3px;
    border-radius: 2px;
    background-color: #606060;
}

.work-area {
    height: 7px;
    margin-top: 0;
    background-color: #565656;
}

.ruler {
    display: flex;
    justify-content: space-between;
    flex: none;
    height: 12px;
    padding-top: 1px;
}

.ruler span {
    display: flex;
    flex-direction: column;
    align-items: center;
    width: 0;
}

.ruler span::after {
    content: "";
    width: 1px;
    height: 3px;
    background-color: #777;
}

.cached {
    flex: none;
    height: 2px;
    background-color: #12a012;
}

.layer-bar {
    flex: none;
    height: 9px;
    border-bottom: 1px solid #2b3a9c;
    background: linear-gradient(#5b6cd4, #4557c4);
}

.tracks {
    background-color: #232323;
}

.tracks i {
    position: relative;
    border-bottom: 1px solid #1a1a1a;
}

/* Small I-beam where the playhead crosses a property row */
.tracks i::before {
    content: "";
    position: absolute;
    left: calc(7.7% - 2px);
    top: 2px;
    width: 5px;
    height: 5px;
    border: solid #aaa;
    border-width: 1px 0;
    background: linear-gradient(90deg, transparent 1px, #999 1px, #999 4px, transparent 4px);
}

.tracks .empty::before {
    display: none;
}

.playhead {
    position: absolute;
    left: 7.7%;
    top: 9px;
    bottom: 0;
    width: 1px;
    background-color: #2e62b8;
}

.playhead::before {
    content: "";
    position: absolute;
    left: -3px;
    width: 7px;
    height: 6px;
    border-radius: 1px 1px 3px 3px;
    background-color: #2f8bf0;
}

.graph-side {
    display: flex;
    flex-direction: column;
    align-items: center;
    gap: 2px;
    padding: 18px 0 0 3px;
}

.graph-side svg {
    width: 7px;
    height: 8px;
    color: #aaa;
}

.graph-side i {
    width: 4px;
    height: 81px;
    border-radius: 2px;
    background-color: #484848;
}

.graph-foot {
    display: flex;
    align-items: center;
    grid-column: span 2;
    gap: 3px;
}

.graph-foot .small {
    width: 5px;
    height: 3px;
}

.graph-foot .big {
    width: 9px;
    height: 5px;
}

.graph-foot input {
    appearance: none;
    width: 30px;
    height: 6px;
    background: linear-gradient(#444, #444) center / 100% 1px no-repeat;
}

.graph-foot input::-webkit-slider-thumb {
    appearance: none;
    width: 6px;
    height: 6px;
    border: 1px solid #ccc;
    border-radius: 50%;
    background-color: #1c1c1c;
}
```
